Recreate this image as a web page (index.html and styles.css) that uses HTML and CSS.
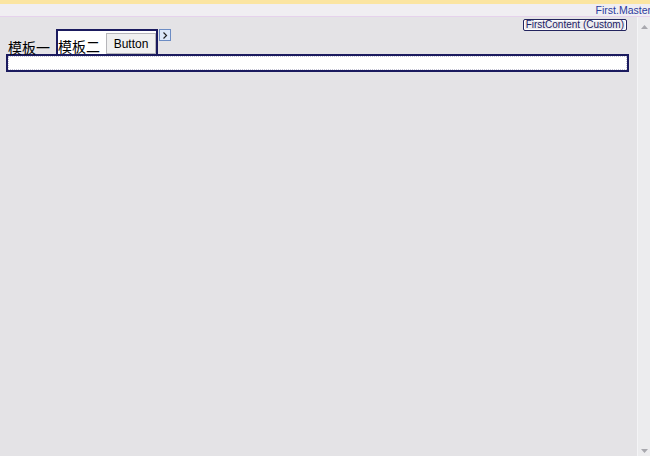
FILE: index.html
```html
<!DOCTYPE html>
<html>
<head>
<meta charset="utf-8">
<link rel="stylesheet" href="styles.css">
</head>
<body>
<div class="topband"></div>
<div class="header"><span class="master">First.Master</span></div>
<div class="main">
  <div class="content">
    <div class="tagrow"><span class="tag">FirstContent (Custom)</span></div>
    <div class="row">
      <span class="t1">模板一</span>
      <div class="box">
        <span class="t2">模板二</span>
        <button class="btn">Button</button>
      </div>
      <span class="smart"><svg width="6" height="7" viewBox="0 0 6 7"><path d="M1.5 0.5 L4.5 3.5 L1.5 6.5" fill="none" stroke="#222" stroke-width="1.2"/></svg></span>
    </div>
    <div class="region"><div class="inner"></div></div>
  </div>
  <div class="scroll">
    <svg class="arr" width="7" height="4" viewBox="0 0 7 4"><path d="M0 4 L3.5 0 L7 4 Z" fill="#a8a8ae"/></svg>
    <svg class="arr" width="7" height="4" viewBox="0 0 7 4"><path d="M0 0 L3.5 4 L7 0 Z" fill="#a8a8ae"/></svg>
  </div>
</div>
</body>
</html>
```
FILE: styles.css
```css
html, body {
  margin: 0;
  padding: 0;
  height: 456px;
  overflow: hidden;
  background: #e4e3e6;
  font-family: "Liberation Sans", "DejaVu Sans", sans-serif;
}
.topband {
  height: 4px;
  background: #fbe5a2;
}
.header {
  height: 12px;
  background: #f0eef2;
  border-bottom: 1px solid #e6d2ec;
  display: flex;
  justify-content: flex-end;
  align-items: center;
}
.master {
  font-size: 10.5px;
  line-height: 12px;
  color: #2d3c9e;
  margin-right: -1px;
}
.main {
  display: flex;
  height: 439px;
}
.content {
  flex: 1;
  min-width: 0;
}
.tagrow {
  height: 12px;
  box-sizing: border-box;
  padding-top: 2px;
  display: flex;
  justify-content: flex-end;
  padding-right: 10px;
}
.tag {
  font-size: 10px;
  line-height: 10px;
  height: 10px;
  padding: 0 2px;
  color: #1c2266;
  border: 1px solid #23245e;
  border-radius: 2px;
  box-shadow: inset 0 0 0 1px #ffffff;
  background: #ebebee;
  white-space: nowrap;
}
.row {
  display: flex;
  align-items: flex-end;
  padding-left: 8px;
  height: 25px;
}
.t1 {
  font-family: "Noto Sans CJK SC", sans-serif;
  font-size: 14px;
  line-height: 14px;
  color: #000;
  margin-right: 6px;
  white-space: nowrap;
}
.box {
  display: flex;
  align-items: flex-end;
  flex-shrink: 0;
  height: 23px;
  border: 2px solid #1b1b5f;
  border-bottom: none;
  background: #ffffff;
}
.t2 {
  font-family: "Noto Sans CJK SC", sans-serif;
  font-size: 14px;
  line-height: 14px;
  color: #000;
  margin-right: 6px;
  margin-bottom: 1px;
  white-space: nowrap;
}
.btn {
  width: 50px;
  height: 21px;
  padding: 0;
  margin: 0;
  font-family: "Liberation Sans", sans-serif;
  font-size: 12px;
  color: #000;
  background: #f0f0f0;
  border: 1px solid #b6b6ba;
  border-radius: 0;
}
.smart {
  align-self: flex-start;
  display: flex;
  align-items: center;
  justify-content: center;
  width: 10px;
  height: 10px;
  margin-left: 1px;
  border: 1px solid #6c8cc4;
  background: #dde8f8;
}
.region {
  margin-left: 6px;
  margin-right: 8px;
  height: 14px;
  border: 2px solid #1b1b5f;
  background: #ffffff;
}
.inner {
  height: 12px;
  border: 1px dotted #c4c4d4;
}
.scroll {
  width: 13px;
  border-left: 1px solid #f4f4f6;
  background: #ececee;
  display: flex;
  flex-direction: column;
  justify-content: space-between;
  align-items: center;
  padding: 8px 0 3px;
  box-sizing: border-box;
}
.arr {
  display: block;
}
```
